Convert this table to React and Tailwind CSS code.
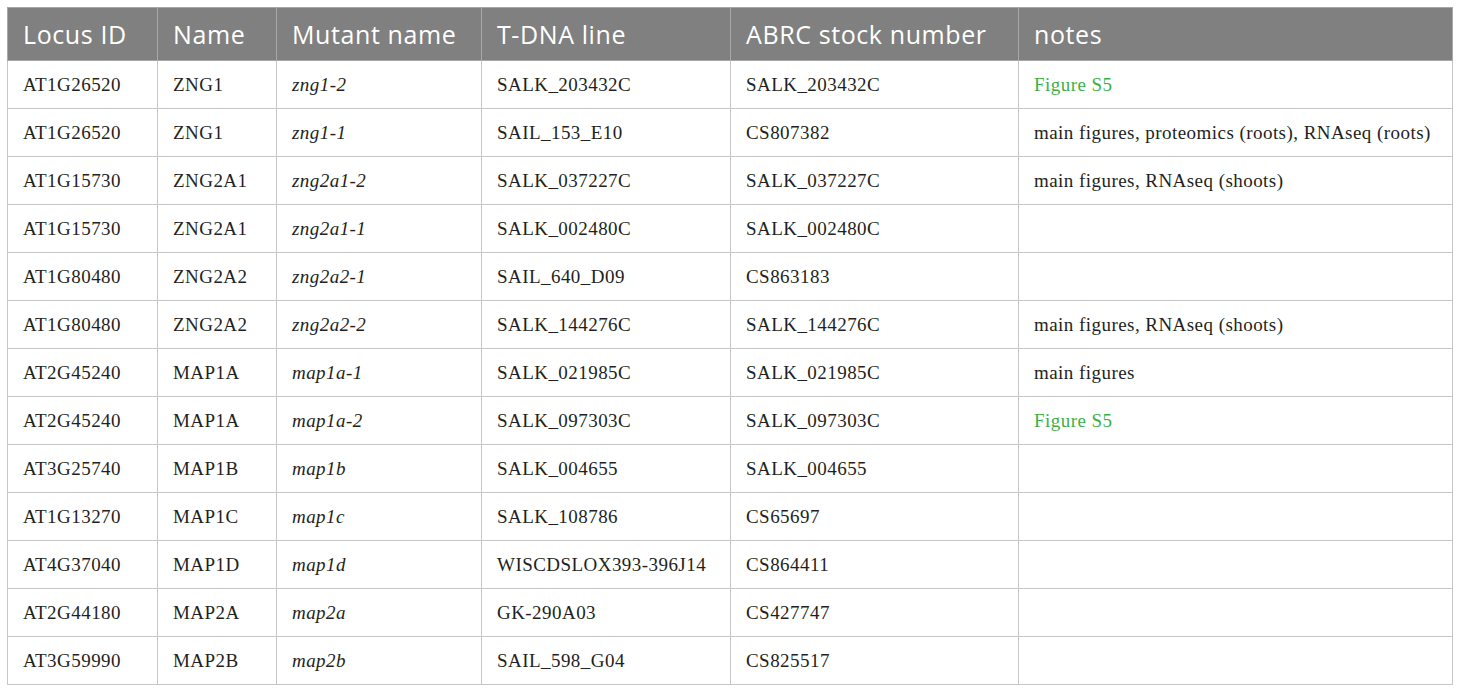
const HEADERS = ['Locus ID', 'Name', 'Mutant name', 'T-DNA line', 'ABRC stock number', 'notes']
const WIDTHS = ['w-[150px]', 'w-[119px]', 'w-[205px]', 'w-[249px]', 'w-[288px]', 'w-[434px]']

const ROWS = [
  ['AT1G26520', 'ZNG1', 'zng1-2', 'SALK_203432C', 'SALK_203432C', 'Figure S5'],
  ['AT1G26520', 'ZNG1', 'zng1-1', 'SAIL_153_E10', 'CS807382', 'main figures, proteomics (roots), RNAseq (roots)'],
  ['AT1G15730', 'ZNG2A1', 'zng2a1-2', 'SALK_037227C', 'SALK_037227C', 'main figures, RNAseq (shoots)'],
  ['AT1G15730', 'ZNG2A1', 'zng2a1-1', 'SALK_002480C', 'SALK_002480C', ''],
  ['AT1G80480', 'ZNG2A2', 'zng2a2-1', 'SAIL_640_D09', 'CS863183', ''],
  ['AT1G80480', 'ZNG2A2', 'zng2a2-2', 'SALK_144276C', 'SALK_144276C', 'main figures, RNAseq (shoots)'],
  ['AT2G45240', 'MAP1A', 'map1a-1', 'SALK_021985C', 'SALK_021985C', 'main figures'],
  ['AT2G45240', 'MAP1A', 'map1a-2', 'SALK_097303C', 'SALK_097303C', 'Figure S5'],
  ['AT3G25740', 'MAP1B', 'map1b', 'SALK_004655', 'SALK_004655', ''],
  ['AT1G13270', 'MAP1C', 'map1c', 'SALK_108786', 'CS65697', ''],
  ['AT4G37040', 'MAP1D', 'map1d', 'WISCDSLOX393-396J14', 'CS864411', ''],
  ['AT2G44180', 'MAP2A', 'map2a', 'GK-290A03', 'CS427747', ''],
  ['AT3G59990', 'MAP2B', 'map2b', 'SAIL_598_G04', 'CS825517', ''],
]

function Cell({ col, value }) {
  const isLink = col === 5 && value === 'Figure S5'
  return (
    <td
      className={`border border-[#c6c6c6] h-[48px] pl-[15px] pr-1 align-middle whitespace-nowrap ${
        col === 2 ? 'italic' : ''
      } ${isLink ? 'text-[#3daf47]' : 'text-[#231f20]'}`}
    >
      {value}
    </td>
  )
}

export default function App() {
  return (
    <div className="bg-white w-[1460px] h-[695px] pt-[7px] pl-[7px]">
      <table className="border-collapse table-fixed w-[1445px] font-['Liberation_Serif','Times_New_Roman',serif] text-[19px] tracking-[0.45px] leading-none">
        <thead>
          <tr className="bg-[#808080]">
            {HEADERS.map((h, i) => (
              <th
                key={h}
                className={`${WIDTHS[i]} h-[53px] border border-[#a8a8a8] pl-[15px] text-left font-normal text-white text-[25px] tracking-[0.6px] font-['Open_Sans',sans-serif] whitespace-nowrap`}
              >
                {h}
              </th>
            ))}
          </tr>
        </thead>
        <tbody>
          {ROWS.map((row, r) => (
            <tr key={r}>
              {row.map((v, c) => (
                <Cell key={c} col={c} value={v} />
              ))}
            </tr>
          ))}
        </tbody>
      </table>
    </div>
  )
}
